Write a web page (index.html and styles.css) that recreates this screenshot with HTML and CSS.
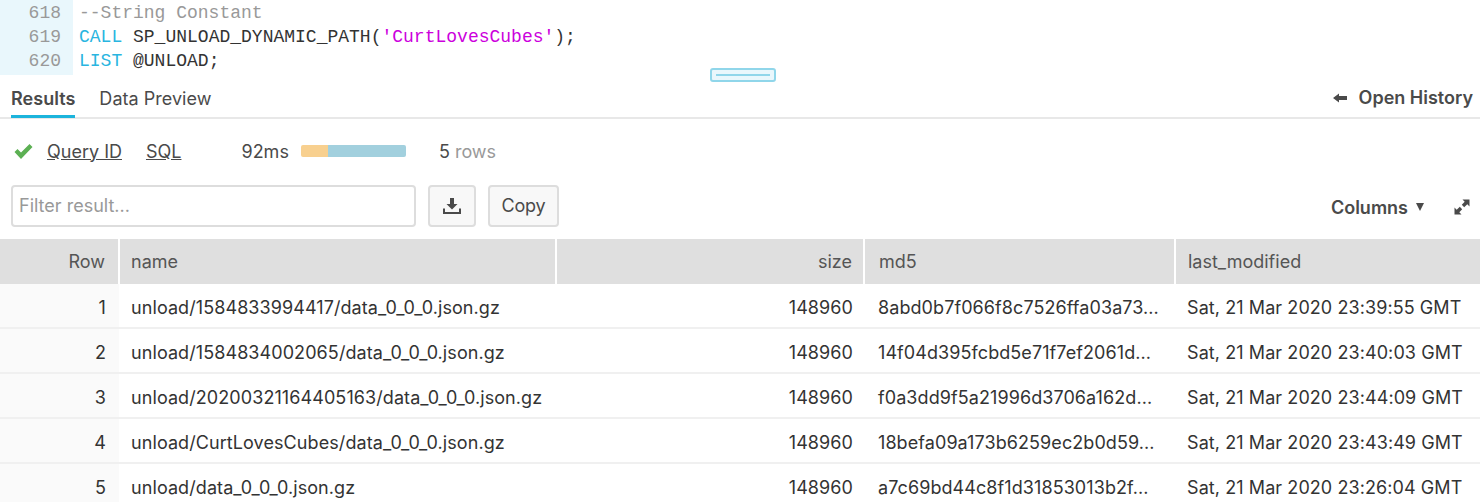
FILE: index.html
```html
<!DOCTYPE html>
<html lang="en">
<head>
    <meta charset="UTF-8">
    <title>Results</title>
    <link rel="stylesheet" href="styles.css">
</head>
<body>
<div class="editor">
    <div class="gutter">
        <div>618</div>
        <div>619</div>
        <div>620</div>
    </div>
    <div class="code">
        <div class="comment">--String Constant</div>
        <div><span class="kw">CALL</span> SP_UNLOAD_DYNAMIC_PATH(<span class="str">'CurtLovesCubes'</span>);</div>
        <div><span class="kw">LIST</span> @UNLOAD;</div>
    </div>
    <div class="drag-handle"></div>
</div>

<div class="tabs">
    <div class="tab active">Results</div>
    <div class="tab">Data Preview</div>
    <div class="open-history">
        <svg width="16" height="10" viewBox="0 0 16 10"><path d="M1 5 L7 0.5 V3 H15 V7 H7 V9.5 Z" fill="#4a4a4a"/></svg>
        Open History
    </div>
</div>

<div class="summary">
    <svg class="check" width="19" height="17" viewBox="0 0 19 17"><path d="M0.5 9 L3.5 6 L7 9.5 L15.5 1 L18.5 4 L7 16 Z" fill="#5cb053"/></svg>
    <a class="link query-id">Query ID</a>
    <a class="link">SQL</a>
    <span class="time">92ms</span>
    <div class="bar"><div class="bar-compile"></div><div class="bar-exec"></div></div>
    <span class="count">5 <span class="muted">rows</span></span>
</div>

<div class="toolbar">
    <input class="filter" type="text" placeholder="Filter result...">
    <button class="btn btn-icon">
        <svg width="18" height="18" viewBox="0 0 18 18"><path d="M7 1 H11 V7 H14.5 L9 12.5 L3.5 7 H7 Z" fill="#4a4a4a"/><path d="M1 11.5 V16 H17 V11.5" fill="none" stroke="#4a4a4a" stroke-width="2"/></svg>
    </button>
    <button class="btn">Copy</button>
    <div class="columns">Columns <span class="caret"></span></div>
    <svg class="expand" width="16" height="16" viewBox="0 0 16 16"><path d="M8.5 0.5 H15.5 V7.5 L13.3 5.3 L10.2 8.2 L7.8 5.8 L10.7 2.7 Z M0.5 8.5 L2.7 10.7 L5.8 7.8 L8.2 10.2 L5.3 13.3 L7.5 15.5 H0.5 Z" fill="#4a4a4a"/></svg>
</div>

<table class="results">
    <thead>
        <tr>
            <th class="num">Row</th>
            <th>name</th>
            <th class="right">size</th>
            <th>md5</th>
            <th>last_modified</th>
        </tr>
    </thead>
    <tbody>
        <tr>
            <td class="num">1</td>
            <td>unload/1584833994417/data_0_0_0.json.gz</td>
            <td class="right">148960</td>
            <td>8abd0b7f066f8c7526ffa03a73...</td>
            <td>Sat, 21 Mar 2020 23:39:55 GMT</td>
        </tr>
        <tr>
            <td class="num">2</td>
            <td>unload/1584834002065/data_0_0_0.json.gz</td>
            <td class="right">148960</td>
            <td>14f04d395fcbd5e71f7ef2061d...</td>
            <td>Sat, 21 Mar 2020 23:40:03 GMT</td>
        </tr>
        <tr>
            <td class="num">3</td>
            <td>unload/20200321164405163/data_0_0_0.json.gz</td>
            <td class="right">148960</td>
            <td>f0a3dd9f5a21996d3706a162d...</td>
            <td>Sat, 21 Mar 2020 23:44:09 GMT</td>
        </tr>
        <tr>
            <td class="num">4</td>
            <td>unload/CurtLovesCubes/data_0_0_0.json.gz</td>
            <td class="right">148960</td>
            <td>18befa09a173b6259ec2b0d59...</td>
            <td>Sat, 21 Mar 2020 23:43:49 GMT</td>
        </tr>
        <tr>
            <td class="num">5</td>
            <td>unload/data_0_0_0.json.gz</td>
            <td class="right">148960</td>
            <td>a7c69bd44c8f1d31853013b2f...</td>
            <td>Sat, 21 Mar 2020 23:26:04 GMT</td>
        </tr>
    </tbody>
</table>
</body>
</html>
```

FILE: styles.css
```css
html, body {
    height: 502px;
    overflow: hidden;
}

body {
    margin: 0;
    background-color: white;
    font-family: Inter, "Noto Sans", sans-serif;
    font-size: 18px;
    color: #4a4a4a;
}

/* sql editor */
.editor {
    position: relative;
    display: flex;
    height: 75px;
    font-family: "Liberation Mono", "DejaVu Sans Mono", monospace;
    font-size: 18px;
    line-height: 24px;
}

.gutter {
    width: 73px;
    padding-top: 1px;
    background-color: #e9f7fc;
    color: #999;
    text-align: right;
}

.gutter div {
    width: 61px;
}

.code {
    padding: 1px 0 0 6px;
    color: #333;
}

.code div {
    white-space: pre;
}

.code .comment {
    color: #999;
}

.kw {
    color: #29b5e0;
}

.str {
    color: #cc00dd;
}

.drag-handle {
    position: absolute;
    left: 710px;
    top: 68px;
    width: 62px;
    height: 10px;
    border: 2px solid #90d6ea;
    border-radius: 3px;
    background-color: #e9f7fc;
}

.drag-handle::after {
    content: "";
    display: block;
    height: 2px;
    margin: 4px 4px 0;
    background-color: #90d6ea;
}

/* tabs */
.tabs {
    display: flex;
    align-items: flex-start;
    height: 42px;
    padding: 0 7px 0 11px;
    border-bottom: 2px solid #e8e8e8;
}

.tab {
    height: 40px;
    margin-right: 24px;
    line-height: 47px;
    letter-spacing: 0.03px;
}

.tab.active {
    border-bottom: 3px solid #1cb4dc;
    font-weight: 600;
}

.open-history {
    display: flex;
    align-items: center;
    gap: 11px;
    margin-left: auto;
    height: 45px;
    font-weight: 600;
}

/* query info */
.summary {
    display: flex;
    align-items: center;
    height: 64px;
    margin-bottom: 2px;
    padding-left: 14px;
}

.link {
    margin-right: 24px;
    text-decoration: underline;
}

.query-id {
    margin-left: 14px;
}

.time {
    margin-left: 36px;
}

.bar {
    display: flex;
    width: 105px;
    height: 12px;
    margin: 0 33px 0 12px;
    border-radius: 2px;
    overflow: hidden;
}

.bar-compile {
    width: 27px;
    background-color: #f8d08f;
}

.bar-exec {
    flex: 1;
    background-color: #a2d0de;
}

.muted {
    color: #999;
}

/* filter + buttons */
.toolbar {
    display: flex;
    align-items: center;
    height: 42px;
    padding: 0 10px 0 11px;
    margin-bottom: 12px;
}

.filter {
    width: 405px;
    height: 42px;
    padding: 0 6px 2px;
    box-sizing: border-box;
    border: 2px solid #ddd;
    border-radius: 4px;
    font-family: inherit;
    font-size: 18px;
    color: #4a4a4a;
    outline: none;
}

.filter::placeholder {
    color: #999;
}

.btn {
    height: 42px;
    margin-left: 12px;
    padding: 0 11.5px 2px;
    border: 2px solid #ddd;
    border-radius: 4px;
    background-color: #f8f8f8;
    font-family: inherit;
    font-size: 18px;
    letter-spacing: -0.2px;
    color: #4a4a4a;
}

.btn-icon {
    display: flex;
    align-items: center;
    width: 48px;
    padding: 0 13px;
    margin-left: 12px;
}

.columns {
    display: flex;
    align-items: center;
    gap: 8px;
    margin-left: auto;
    padding-top: 2px;
    font-weight: 600;
}

.caret {
    width: 0;
    height: 0;
    border-left: 4.5px solid transparent;
    border-right: 4.5px solid transparent;
    border-top: 8px solid #4a4a4a;
}

.expand {
    margin-left: 30px;
    margin-top: 2px;
}

/* result table */
.results {
    width: 1480px;
    table-layout: fixed;
    border-collapse: collapse;
}

.results th {
    height: 45px;
    padding: 0 12px;
    background-color: #dfdfdf;
    border-left: 2px solid white;
    font-weight: 400;
    text-align: left;
    color: #555;
}

.results th:first-child {
    width: 93px;
    padding-right: 13px;
    border-left: none;
}

.results th:nth-child(2) {
    width: 412px;
    padding-left: 11px;
}

.results th:nth-child(3) {
    width: 283px;
    padding-right: 11px;
}

.results th:nth-child(4) {
    width: 283px;
    padding-left: 14px;
}

.results td {
    height: 39px;
    padding: 4px 12px 0;
    border-bottom: 2px solid #f0f0f0;
    white-space: nowrap;
    overflow: hidden;
    letter-spacing: 0.08px;
    color: #333;
}

.results td:first-child {
    padding-right: 13px;
}

.results td:nth-child(3) {
    padding-right: 11px;
}

.results td:nth-child(4) {
    padding-left: 14px;
}

.results th.right, .results td.right, .results th.num, .results td.num {
    text-align: right;
}

.results td.num {
    background-color: #fafafa;
}
```
